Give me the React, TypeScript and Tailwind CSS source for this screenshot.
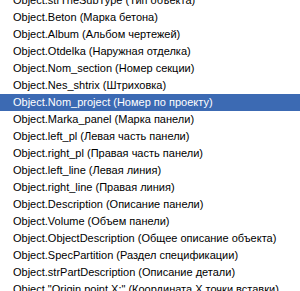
const items = [
  'Object.strTheSubType (Тип объекта)',
  'Object.Beton (Марка бетона)',
  'Object.Album (Альбом чертежей)',
  'Object.Otdelka (Наружная отделка)',
  'Object.Nom_section (Номер секции)',
  'Object.Nes_shtrix (Штриховка)',
  'Object.Nom_project (Номер по проекту)',
  'Object.Marka_panel (Марка панели)',
  'Object.left_pl (Левая часть панели)',
  'Object.right_pl (Правая часть панели)',
  'Object.left_line (Левая линия)',
  'Object.right_line (Правая линия)',
  'Object.Description (Описание панели)',
  'Object.Volume (Объем панели)',
  'Object.ObjectDescription (Общее описание объекта)',
  'Object.SpecPartition (Раздел спецификации)',
  'Object.strPartDescription (Описание детали)',
  'Object."Origin point X:" (Координата X точки вставки)',
]

const selected = 6

export default function App() {
  return (
    <div className="w-[300px] h-[291px] overflow-hidden bg-white">
      <ul className="-mt-[8px] flex flex-col font-['Liberation_Sans',sans-serif] text-[11px]">
        {items.map((item, i) => (
          <li
            key={i}
            className={
              i === selected
                ? 'h-[17px] leading-[17px] pl-[13px] whitespace-nowrap bg-[#3c6ab3] text-white'
                : 'h-[17px] leading-[17px] pl-[13px] whitespace-nowrap text-black'
            }
          >
            {item}
          </li>
        ))}
      </ul>
    </div>
  )
}
